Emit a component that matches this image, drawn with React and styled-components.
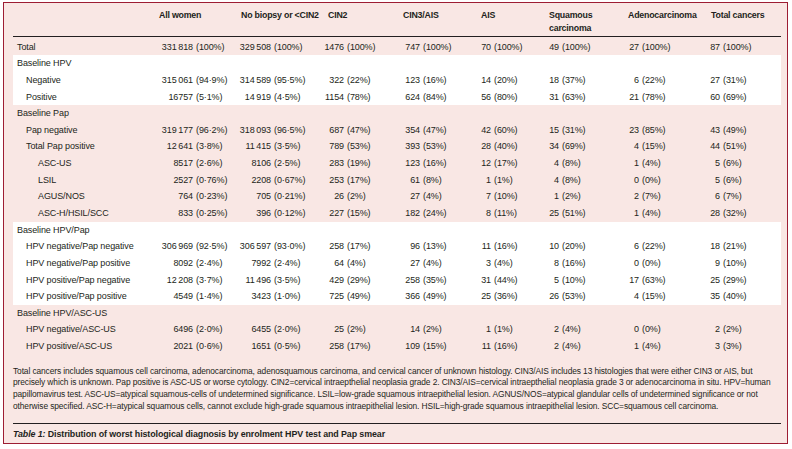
import React from "react";
import styled, { createGlobalStyle } from "styled-components";

const GlobalStyle = createGlobalStyle`
  html, body {
    margin: 0;
    padding: 0;
    background: #fff;
  }
  body {
    font-family: "Liberation Sans", Arial, sans-serif;
    color: #231f20;
  }
`;

const LABEL_W = 146;
const COLS = [
  { title: "All women", w: 82, num: 34 },
  { title: "No biopsy or <CIN2", w: 87, num: 30 },
  { title: "CIN2", w: 75, num: 16 },
  { title: "CIN3/AIS", w: 78, num: 17 },
  { title: "AIS", w: 68, num: 10 },
  { title: ["Squamous", "carcinoma"], w: 79, num: 10 },
  { title: "Adenocarcinoma", w: 83, num: 11 },
  { title: "Total cancers", w: 70, num: 9 },
];
const GRID = `${LABEL_W}px ${COLS.map((c) => c.w + "px").join(" ")}`;
const ROW_H = 16.65;
const INDENT = [4, 13, 25];

const Frame = styled.div`
  box-sizing: border-box;
  width: 785px;
  height: 442px;
  margin: 2px 0 0 3px;
  border: 1px solid #9d1d33;
  background: #f9e7e4;
  padding: 0 6px 0 9px;
  display: flex;
  flex-direction: column;
`;

const HeaderRow = styled.div`
  display: grid;
  grid-template-columns: ${GRID};
  height: 34px;
  padding-top: 6px;
  box-sizing: border-box;
  border-bottom: 1px solid #231f20;
`;

const HeadCell = styled.div`
  font-weight: bold;
  font-size: 8.8px;
  line-height: 13px;
  letter-spacing: -0.2px;
  white-space: nowrap;
`;

const Body = styled.div`
  margin-top: 1.6px;
`;

const Section = styled.div`
  background: ${(p) => (p.$white ? "#ffffff" : "transparent")};
`;

const Row = styled.div`
  display: grid;
  grid-template-columns: ${GRID};
  height: ${ROW_H}px;
  line-height: ${ROW_H}px;
  font-size: 9px;
  letter-spacing: -0.1px;
  white-space: nowrap;
`;

const Label = styled.div`
  padding-left: ${(p) => INDENT[p.$level]}px;
`;

const Cell = styled.div`
  display: flex;
`;

const Num = styled.span`
  flex: none;
  display: flex;
  justify-content: flex-end;
  width: ${(p) => p.$w}px;
`;

const Pct = styled.span`
  margin-left: 3px;
`;

const Notes = styled.p`
  margin: 11px 0 0;
  font-size: 8.4px;
  line-height: 11.7px;
  letter-spacing: -0.1px;
  white-space: nowrap;
`;

const Rule = styled.div`
  margin-top: 10px;
  width: 768px;
  height: 1px;
  background: #231f20;
`;

const Caption = styled.div`
  padding-top: 4px;
  font-size: 8.9px;
  line-height: 12px;
  font-weight: bold;
  letter-spacing: -0.1px;
  em {
    font-style: italic;
  }
`;

const t = "\u2009";
const r = (label, level, ...vals) => ({ label, level, vals });

const SECTIONS = [
  {
    white: false,
    rows: [
      r("Total", 0, `331${t}818 (100%)`, `329${t}508 (100%)`, "1476 (100%)", "747 (100%)", "70 (100%)", "49 (100%)", "27 (100%)", "87 (100%)"),
    ],
  },
  {
    white: true,
    rows: [
      r("Baseline HPV", 0),
      r("Negative", 1, `315${t}061 (94·9%)`, `314${t}589 (95·5%)`, "322 (22%)", "123 (16%)", "14 (20%)", "18 (37%)", "6 (22%)", "27 (31%)"),
      r("Positive", 1, "16757 (5·1%)", `14${t}919 (4·5%)`, "1154 (78%)", "624 (84%)", "56 (80%)", "31 (63%)", "21 (78%)", "60 (69%)"),
    ],
  },
  {
    white: false,
    rows: [
      r("Baseline Pap", 0),
      r("Pap negative", 1, `319${t}177 (96·2%)`, `318${t}093 (96·5%)`, "687 (47%)", "354 (47%)", "42 (60%)", "15 (31%)", "23 (85%)", "43 (49%)"),
      r("Total Pap positive", 1, `12${t}641 (3·8%)`, `11${t}415 (3·5%)`, "789 (53%)", "393 (53%)", "28 (40%)", "34 (69%)", "4 (15%)", "44 (51%)"),
      r("ASC-US", 2, "8517 (2·6%)", "8106 (2·5%)", "283 (19%)", "123 (16%)", "12 (17%)", "4 (8%)", "1 (4%)", "5 (6%)"),
      r("LSIL", 2, "2527 (0·76%)", "2208 (0·67%)", "253 (17%)", "61 (8%)", "1 (1%)", "4 (8%)", "0 (0%)", "5 (6%)"),
      r("AGUS/NOS", 2, "764 (0·23%)", "705 (0·21%)", "26 (2%)", "27 (4%)", "7 (10%)", "1 (2%)", "2 (7%)", "6 (7%)"),
      r("ASC-H/HSIL/SCC", 2, "833 (0·25%)", "396 (0·12%)", "227 (15%)", "182 (24%)", "8 (11%)", "25 (51%)", "1 (4%)", "28 (32%)"),
    ],
  },
  {
    white: true,
    rows: [
      r("Baseline HPV/Pap", 0),
      r("HPV negative/Pap negative", 1, `306${t}969 (92·5%)`, `306${t}597 (93·0%)`, "258 (17%)", "96 (13%)", "11 (16%)", "10 (20%)", "6 (22%)", "18 (21%)"),
      r("HPV negative/Pap positive", 1, "8092 (2·4%)", "7992 (2·4%)", "64 (4%)", "27 (4%)", "3 (4%)", "8 (16%)", "0 (0%)", "9 (10%)"),
      r("HPV positive/Pap negative", 1, `12${t}208 (3·7%)`, `11${t}496 (3·5%)`, "429 (29%)", "258 (35%)", "31 (44%)", "5 (10%)", "17 (63%)", "25 (29%)"),
      r("HPV positive/Pap positive", 1, "4549 (1·4%)", "3423 (1·0%)", "725 (49%)", "366 (49%)", "25 (36%)", "26 (53%)", "4 (15%)", "35 (40%)"),
    ],
  },
  {
    white: false,
    rows: [
      r("Baseline HPV/ASC-US", 0),
      r("HPV negative/ASC-US", 1, "6496 (2·0%)", "6455 (2·0%)", "25 (2%)", "14 (2%)", "1 (1%)", "2 (4%)", "0 (0%)", "2 (2%)"),
      r("HPV positive/ASC-US", 1, "2021 (0·6%)", "1651 (0·5%)", "258 (17%)", "109 (15%)", "11 (16%)", "2 (4%)", "1 (4%)", "3 (3%)"),
    ],
  },
];

const NOTE_LINES = [
  "Total cancers includes squamous cell carcinoma, adenocarcinoma, adenosquamous carcinoma, and cervical cancer of unknown histology. CIN3/AIS includes 13 histologies that were either CIN3 or AIS, but",
  "precisely which is unknown. Pap positive is ASC-US or worse cytology. CIN2=cervical intraepthelial neoplasia grade 2. CIN3/AIS=cervical intraepthelial neoplasia grade 3 or adenocarcinoma in situ. HPV=human",
  "papillomavirus test. ASC-US=atypical squamous-cells of undetermined significance. LSIL=low-grade squamous intraepithelial lesion. AGNUS/NOS=atypical glandular cells of undetermined significance or not",
  "otherwise specified. ASC-H=atypical squamous cells, cannot exclude high-grade squamous intraepithelial lesion. HSIL=high-grade squamous intraepithelial lesion. SCC=squamous cell carcinoma.",
];

const Value = ({ text, w }) => {
  const i = text.indexOf(" (");
  return (
    <Cell>
      <Num $w={w}>{text.slice(0, i)}</Num>
      <Pct>{text.slice(i + 1)}</Pct>
    </Cell>
  );
};

const App = () => {
  return (
    <>
      <GlobalStyle />
      <Frame>
        <HeaderRow>
          <HeadCell />
          {COLS.map((c, i) => (
            <HeadCell key={i}>
              {Array.isArray(c.title) ? (
                <>
                  {c.title[0]}
                  <br />
                  {c.title[1]}
                </>
              ) : (
                c.title
              )}
            </HeadCell>
          ))}
        </HeaderRow>
        <Body>
          {SECTIONS.map((s, si) => (
            <Section key={si} $white={s.white}>
              {s.rows.map((row, ri) => (
                <Row key={ri}>
                  <Label $level={row.level}>{row.label}</Label>
                  {row.vals.map((v, vi) => (
                    <Value key={vi} text={v} w={COLS[vi].num} />
                  ))}
                </Row>
              ))}
            </Section>
          ))}
        </Body>
        <Notes>
          {NOTE_LINES.map((line, i) => (
            <React.Fragment key={i}>
              {line}
              {i < NOTE_LINES.length - 1 && <br />}
            </React.Fragment>
          ))}
        </Notes>
        <Rule />
        <Caption>
          <em>Table 1:</em> Distribution of worst histological diagnosis by enrolment HPV test and Pap smear
        </Caption>
      </Frame>
    </>
  );
};

export default App;
